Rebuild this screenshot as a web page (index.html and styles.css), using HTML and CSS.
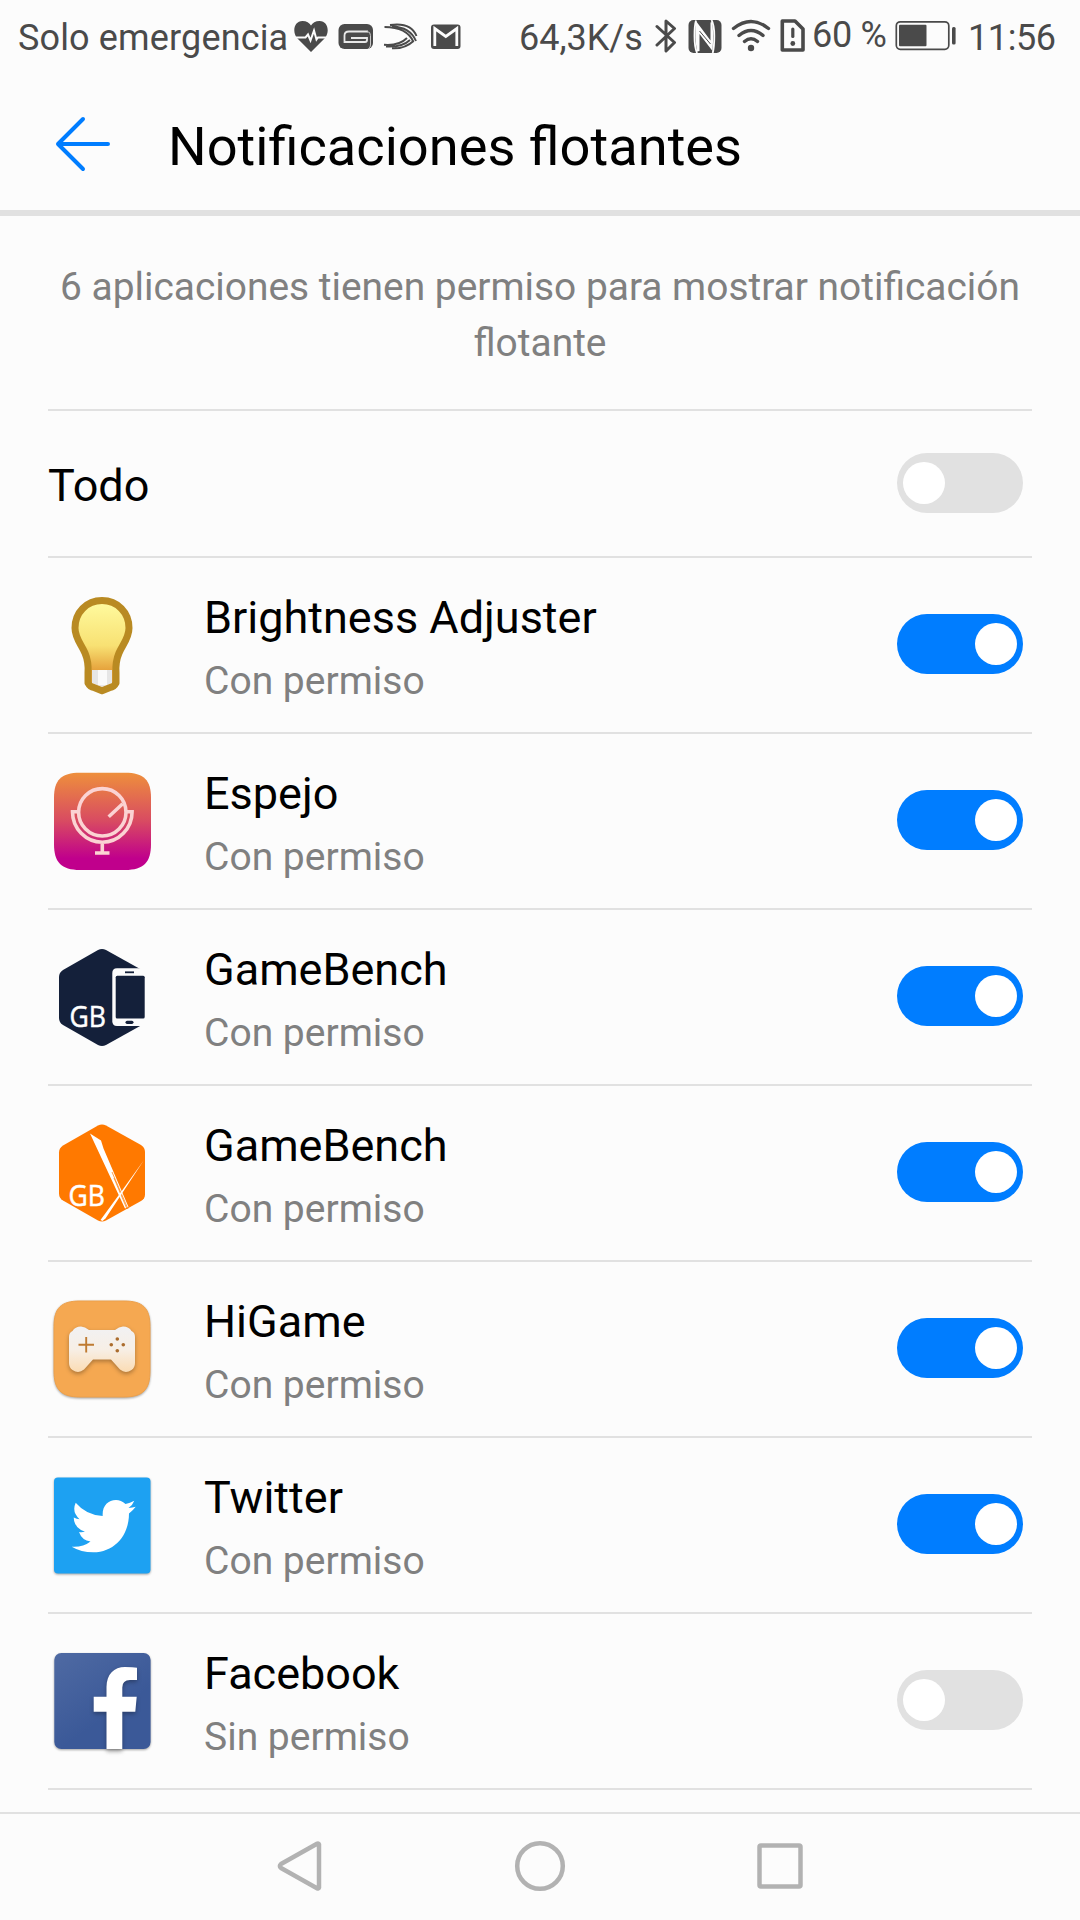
FILE: index.html
```html
<!DOCTYPE html>
<html lang="es">
<head>
    <meta charset="UTF-8">
    <meta name="viewport" content="width=device-width, initial-scale=1.0">
    <title>Notificaciones flotantes</title>
    <link rel="stylesheet" href="styles.css">
</head>
<body>
    <div class="status-bar">
        <span class="carrier">Solo emergencia</span>
        <div class="status-icons">
            <svg width="36" height="48" viewBox="0 0 36 48">
                <path fill="#4a4a4a" d="M18 40L4 26C-1 20 1 9 9.500 9c4 0 7 2 8.500 4.500C19.500 11 22.500 9 26.500 9 35 9 37 20 32 26z"/>
                <path fill="none" stroke="#fcfcfc" stroke-width="2" d="M1 25.500h11.500l2.500-3 2.500 6 3.500-10 2.500 9 1.500-2H35"/>
            </svg>
            <svg width="36" height="48" viewBox="0 0 36 48">
                <rect x="0.500" y="12" width="34.500" height="25" rx="6" fill="#4a4a4a"/>
                <path fill="none" stroke="#e8e8e8" stroke-width="1.800" d="M30 19.500H11q-4.500 0-4.500 4V30h20.500q2 0 2-2v-2H13"/>
                <path fill="none" stroke="#c8c8c8" stroke-width="1" d="M29 19.500q3.500 0 3.500 4V33q0 2-2 4"/>
            </svg>
            <svg width="36" height="48" viewBox="0 0 36 48">
                <g fill="none" stroke="#4a4a4a" stroke-width="1.900">
                    <path d="M7 13Q28 10 33.500 24M9 14.500Q27 15 33 29M1.500 15Q24 15 30.500 30"/>
                    <path d="M1 32.800Q16 34 24 26M3 34.500Q19 35.500 27 28M9 36.300Q22 37 30.500 29"/>
                </g>
            </svg>
            <svg width="32" height="48" viewBox="0 0 32 48">
                <rect x="1" y="12.500" width="29.500" height="24.500" rx="3" fill="#4a4a4a"/>
                <path fill="none" stroke="#fcfcfc" stroke-width="2.800" d="M4.800 34V16.500l11 8 11-8V34"/>
            </svg>
        </div>
        <span class="speed">64,3K/s</span>
        <div class="signal-icons">
            <svg width="24" height="48" viewBox="0 0 24 48">
                <path fill="none" stroke="#4a4a4a" stroke-width="3" stroke-linejoin="round" stroke-linecap="round" d="M2 14.500l17.500 16-8.500 8.500V9l8.500 7.500L2 33"/>
            </svg>
            <svg width="34" height="48" viewBox="0 0 34 48">
                <rect x="0.500" y="8" width="33" height="33" rx="5" fill="#4a4a4a"/>
                <path fill="none" stroke="#fcfcfc" stroke-width="1.800" d="M8 8.500Q6.500 13 6.500 24T9 41M23.500 8q2.800 5 2.800 16t-1.600 17"/>
                <path fill="#fcfcfc" d="M8 9l14.500 19.500V10.500L24 10q2 9 .5 29L11.500 22v17L9 39.500Q6.500 25 8 9z"/>
                <path fill="none" stroke="#4a4a4a" stroke-width="1" d="M11.500 19L22.500 32"/>
            </svg>
            <svg width="40" height="48" viewBox="0 0 40 48">
                <g fill="none" stroke="#4a4a4a" stroke-width="3.400" stroke-linecap="round">
                    <path d="M2.500 16.500Q20 2.500 37.500 16.500M8 23.500q12-10 24 0M13.500 29.500q6.500-5.500 13 0"/>
                </g>
                <circle cx="20" cy="36" r="3.200" fill="#4a4a4a"/>
            </svg>
            <svg width="26" height="48" viewBox="0 0 26 48">
                <path fill="none" stroke="#4a4a4a" stroke-width="3.600" stroke-linejoin="round" d="M2.300 9h12.700l8 8v21H2.300z"/>
                <path stroke="#4a4a4a" stroke-width="3.200" stroke-linecap="round" d="M12.800 17v7.500"/>
                <circle cx="12.800" cy="31.500" r="2.400" fill="#4a4a4a"/>
            </svg>
        </div>
        <span class="percent">60 %</span>
        <svg class="battery" width="62" height="48" viewBox="0 0 62 48">
            <rect x="1.300" y="9.800" width="52.500" height="27.500" rx="4" fill="none" stroke="#4a4a4a" stroke-width="1.700"/>
            <rect x="4" y="12.700" width="27.500" height="21.500" rx="1" fill="#4a4a4a"/>
            <rect x="57" y="15" width="3.600" height="17.500" rx="1.500" fill="#4a4a4a"/>
        </svg>
        <span class="clock">11:56</span>
    </div>

    <header class="header">
        <svg class="back" width="56" height="58" viewBox="0 0 56 58">
            <path fill="none" stroke="#007dff" stroke-width="4" stroke-linecap="round" stroke-linejoin="round" d="M29 4L4 29l25 25M4 29h50"/>
        </svg>
        <h1>Notificaciones flotantes</h1>
    </header>

    <main class="content">
        <p class="summary">6 aplicaciones tienen permiso para mostrar notificación flotante</p>

        <div class="row row-all">
            <span class="name">Todo</span>
            <span class="toggle"></span>
        </div>

        <div class="row">
            <svg class="icon" viewBox="0 0 108 108">
                <defs>
                    <linearGradient id="bulb" x1="0" y1="0" x2="0" y2="1">
                        <stop offset="0" stop-color="#fffba0"/>
                        <stop offset="0.500" stop-color="#f8e173"/>
                        <stop offset="0.780" stop-color="#e5a03a"/>
                    </linearGradient>
                </defs>
                <path fill="url(#bulb)" stroke="#b98a22" stroke-width="7" stroke-linejoin="round" d="M54 9.500C38.500 9.500 27 21.500 27 37c0 10 6 16 10 25 3 7 3.500 13 3 20v10q2 4 6 4.500l8 3.300 8-3.300q4-.5 6-4.500V82c-.5-7 0-13 3-20 4-9 10-15 10-25C81 21.500 69.500 9.500 54 9.500z"/>
                <path fill="#e6e6e6" d="M44 79h20v13l-10 4-10-4z"/>
                <path fill="#fafafa" d="M50 79h9v15h-9z"/>
            </svg>
            <div class="info">
                <span class="name">Brightness Adjuster</span>
                <span class="state">Con permiso</span>
            </div>
            <span class="toggle on"></span>
        </div>

        <div class="row">
            <svg class="icon" viewBox="0 0 108 108">
                <defs>
                    <linearGradient id="mirror" x1="0" y1="0" x2="0" y2="1">
                        <stop offset="0" stop-color="#ee8f3c"/>
                        <stop offset="0.500" stop-color="#d84a62"/>
                        <stop offset="0.880" stop-color="#c0008c"/>
                    </linearGradient>
                </defs>
                <path fill="url(#mirror)" d="M32 5.700h45C96 5.700 103 13 103 31v46c0 18-7 26-26 26H32C13 103 6 95 6 77V31C6 13 13 5.700 32 5.700z"/>
                <g fill="none" stroke="#fbd3d3" stroke-width="3.600">
                    <circle cx="54.300" cy="45.300" r="23.700"/>
                    <path d="M31 44.700h-6.500a29.800 30.500 0 0 0 59.600 0h-6.500M54.300 75v10M47 86h14.500M60.700 49.700l14-13"/>
                </g>
            </svg>
            <div class="info">
                <span class="name">Espejo</span>
                <span class="state">Con permiso</span>
            </div>
            <span class="toggle on"></span>
        </div>

        <div class="row">
            <svg class="icon" viewBox="0 0 108 108">
                <path fill="#14203a" d="M50 7q4-2 8 0l35 19.500q4 2.500 4 7V76q0 4-4 6.500L58 102q-4 2-8 0L15 82q-4-2.500-4-7V34q0-4.500 4-7z"/>
                <path fill="#fcfcfc" d="M69 25.300h30v57.700H69q-4.700 0-4.700-4.700V30q0-4.700 4.700-4.700z"/>
                <rect x="67.700" y="32.700" width="29" height="42.800" rx="1.500" fill="#14203a"/>
                <path fill="none" stroke="#14203a" stroke-width="1.800" d="M77 29.300h9"/>
                <rect x="77.500" y="77.700" width="8" height="3.200" rx="1.600" fill="#14203a"/>
                <text class="gb" x="21.500" y="84" textLength="36.500" lengthAdjust="spacingAndGlyphs">GB</text>
            </svg>
            <div class="info">
                <span class="name">GameBench</span>
                <span class="state">Con permiso</span>
            </div>
            <span class="toggle on"></span>
        </div>

        <div class="row">
            <svg class="icon" viewBox="0 0 108 108">
                <path fill="#ff7900" d="M50 6.500q4-2 8 0l35 19.500q4 2.500 4 7V75.500q0 4-4 6.500L58 101.500q-4 2-8 0L15 81.500q-4-2.500-4-7V33.500q0-4.500 4-7z"/>
                <path fill="#fff" d="M42 14.500l11 7 2.500 8L80.500 88l-3.500 1.500z"/>
                <path fill="none" stroke="#ff7900" stroke-width="0.700" d="M66 59l13 31M64 53l16 37"/>
                <path fill="#fff" d="M96 41L57.500 99.500l-3 2.500-2-1L73 73z"/>
                <text class="gb" x="20.500" y="86.700" textLength="36.500" lengthAdjust="spacingAndGlyphs">GB</text>
            </svg>
            <div class="info">
                <span class="name">GameBench</span>
                <span class="state">Con permiso</span>
            </div>
            <span class="toggle on"></span>
        </div>

        <div class="row">
            <svg class="icon icon-shadow" viewBox="0 0 108 108">
                <defs>
                    <linearGradient id="pad" x1="0" y1="0" x2="0" y2="1">
                        <stop offset="0" stop-color="#f1f1f3"/>
                        <stop offset="0.500" stop-color="#f7efe6"/>
                        <stop offset="1" stop-color="#fbdcb4"/>
                    </linearGradient>
                </defs>
                <path fill="#f5a851" stroke="#eda04a" d="M32 6h44c19 0 26 7 26 25.500v44.500c0 18.500-7 26-26 26H32c-19 0-26-7.500-26-26V31.500C6 13 13 6 32 6z"/>
                <path class="pad" fill="url(#pad)" d="M33 31.500q4 0 8 3.500h26q4-3.500 8-3.500 6 0 8.500 4.500 3.500 1.500 3.500 6V68q0 4.500-3.500 7-6 4-11.500-.5L63 64.500H45l-9 10q-5.500 4.500-11.500.5-3.500-2.500-3.500-7V42q0-4.500 3.500-6Q27 31.500 33 31.500z"/>
                <path fill="none" stroke="#bf7b32" stroke-width="1.900" d="M30.500 49.700h15.500M38.200 42v15.500"/>
                <g fill="#ab6c2d">
                    <circle cx="69.300" cy="44" r="1.800"/>
                    <circle cx="63.300" cy="49.700" r="1.800"/>
                    <circle cx="75.300" cy="49.700" r="1.800"/>
                    <circle cx="69.300" cy="55.700" r="1.800"/>
                </g>
            </svg>
            <div class="info">
                <span class="name">HiGame</span>
                <span class="state">Con permiso</span>
            </div>
            <span class="toggle on"></span>
        </div>

        <div class="row">
            <svg class="icon icon-shadow" viewBox="0 0 108 108">
                <rect x="6" y="6.500" width="96.500" height="96" rx="4" fill="#1da1f2"/>
                <path fill="#fff" d="M27.700 31.700Q38 44 54.700 45C54 35 60 29 68 29q5 0 9.500 4 4.500-1 8.800-3.200-1.800 4.700-5.800 7.200 4 -.2 7.200-1.200-2.700 3.700-6.700 6.700C81 65 66 81.300 45.300 81.300q-12.300 0-21.600-5.500Q35 76.500 42.500 70.500 34 69.500 31 61q3 .5 6-.3Q26 57 25.700 46.500q3.300 1.700 5.800 1.700Q23.500 41 27.700 31.700z"/>
            </svg>
            <div class="info">
                <span class="name">Twitter</span>
                <span class="state">Con permiso</span>
            </div>
            <span class="toggle on"></span>
        </div>

        <div class="row">
            <svg class="icon icon-shadow" viewBox="0 0 108 108">
                <defs>
                    <linearGradient id="fb" x1="0" y1="0" x2="0.700" y2="1">
                        <stop offset="0" stop-color="#4f6aa3"/>
                        <stop offset="0.700" stop-color="#3b5998"/>
                    </linearGradient>
                </defs>
                <rect x="6.300" y="6" width="96.300" height="96" rx="7" fill="url(#fb)"/>
                <path class="pad" fill="#fff" d="M58.500 102V64.700H45.700v-15h12.800V40C58.500 27 66 20 77 20q8 0 12 .8V33h-7q-7.700 0-7.700 7.500v9.200h14.400l-1.400 15h-13V102z"/>
            </svg>
            <div class="info">
                <span class="name">Facebook</span>
                <span class="state">Sin permiso</span>
            </div>
            <span class="toggle"></span>
        </div>
    </main>

    <nav class="nav-bar">
        <svg width="60" height="60" viewBox="0 0 60 60">
            <path d="M49 8.500v43q-.5 1.500-2 .7L11 32q-2-2 0-4L47 7.800q1.500-.8 2 .7z"/>
        </svg>
        <svg width="60" height="60" viewBox="0 0 60 60">
            <circle cx="30" cy="30" r="22.800"/>
        </svg>
        <svg width="60" height="60" viewBox="0 0 60 60">
            <rect x="9.500" y="9.500" width="41" height="41" rx="1.500"/>
        </svg>
    </nav>
</body>
</html>
```

FILE: styles.css
```css
* {
    box-sizing: border-box;
}
body {
    font-family: Roboto, "Noto Sans", sans-serif;
    margin: 0;
    height: 1920px;
    display: flex;
    flex-direction: column;
    overflow: hidden;
    background-color: #fcfcfc;
    color: #000;
}
svg {
    display: block;
    flex-shrink: 0;
}

/* status bar */
.status-bar {
    display: flex;
    height: 72px;
    padding-left: 18px;
    padding-top: 12px;
    font-size: 36px;
    line-height: 52px;
    color: #4a4a4a;
    white-space: nowrap;
}
.carrier {
    width: 275px;
    letter-spacing: 0.15px;
}
.status-icons {
    display: flex;
    gap: 9px;
    width: 226px;
}
.status-icons svg:last-child {
    margin-left: 2px;
}
.speed {
    width: 136px;
}
.signal-icons {
    display: flex;
    gap: 9px;
    width: 157px;
}
.percent {
    width: 83px;
    line-height: 46px;
    letter-spacing: -0.3px;
}
.clock {
    margin-left: 11px;
    letter-spacing: -0.4px;
}

/* title */
.header {
    display: flex;
    align-items: center;
    height: 144px;
    padding-left: 54px;
    border-bottom: 6px solid #e1e1e1;
}
.back {
    margin-top: 6px;
}
.header h1 {
    margin: 11px 0 0 58px;
    font-size: 54.2px;
    font-weight: 400;
    line-height: 64px;
}

/* list */
.content {
    flex: 1;
    padding: 0 48px;
}
.summary {
    height: 195px;
    margin: 0;
    padding-top: 43px;
    border-bottom: 2px solid #e1e1e1;
    font-size: 38.9px;
    line-height: 56px;
    text-align: center;
    color: #808080;
}
.row {
    display: flex;
    align-items: center;
    height: 176px;
    padding-right: 9px;
    border-bottom: 2px solid #e1e1e1;
}
.row-all {
    height: 147px;
}
.row-all .name {
    flex: 1;
    padding-top: 4px;
}
.icon {
    width: 108px;
    height: 108px;
}
.icon-shadow {
    filter: drop-shadow(0 1px 1px rgba(0, 0, 0, 0.35));
}
.pad {
    filter: drop-shadow(0 2px 2px rgba(0, 0, 0, 0.3));
}
.gb {
    font-family: "Open Sans", "Noto Sans", sans-serif;
    font-size: 29px;
    fill: #fff;
    stroke: #fff;
    stroke-width: 0.5px;
}
.info {
    display: flex;
    flex: 1;
    flex-direction: column;
    padding-top: 9px;
    margin-left: 48px;
}
.name {
    font-size: 45px;
    line-height: 62px;
}
.state {
    font-size: 39px;
    line-height: 64px;
    color: #808080;
}
.toggle {
    width: 126px;
    height: 60px;
    margin-bottom: 2px;
    padding: 9px 6px;
    border-radius: 30px;
    background-color: #e1e1e1;
}
.toggle::before {
    content: "";
    display: block;
    width: 42px;
    height: 42px;
    border-radius: 50%;
    background-color: #fff;
}
.toggle.on {
    background-color: #007dff;
}
.toggle.on::before {
    margin-left: auto;
}

/* navigation */
.nav-bar {
    display: flex;
    justify-content: center;
    align-items: center;
    gap: 180px;
    height: 108px;
    padding-bottom: 2px;
    border-top: 2px solid #e1e1e1;
}
.nav-bar svg {
    fill: none;
    stroke: #b2b2b2;
    stroke-width: 4.5px;
    stroke-linejoin: round;
}
```
